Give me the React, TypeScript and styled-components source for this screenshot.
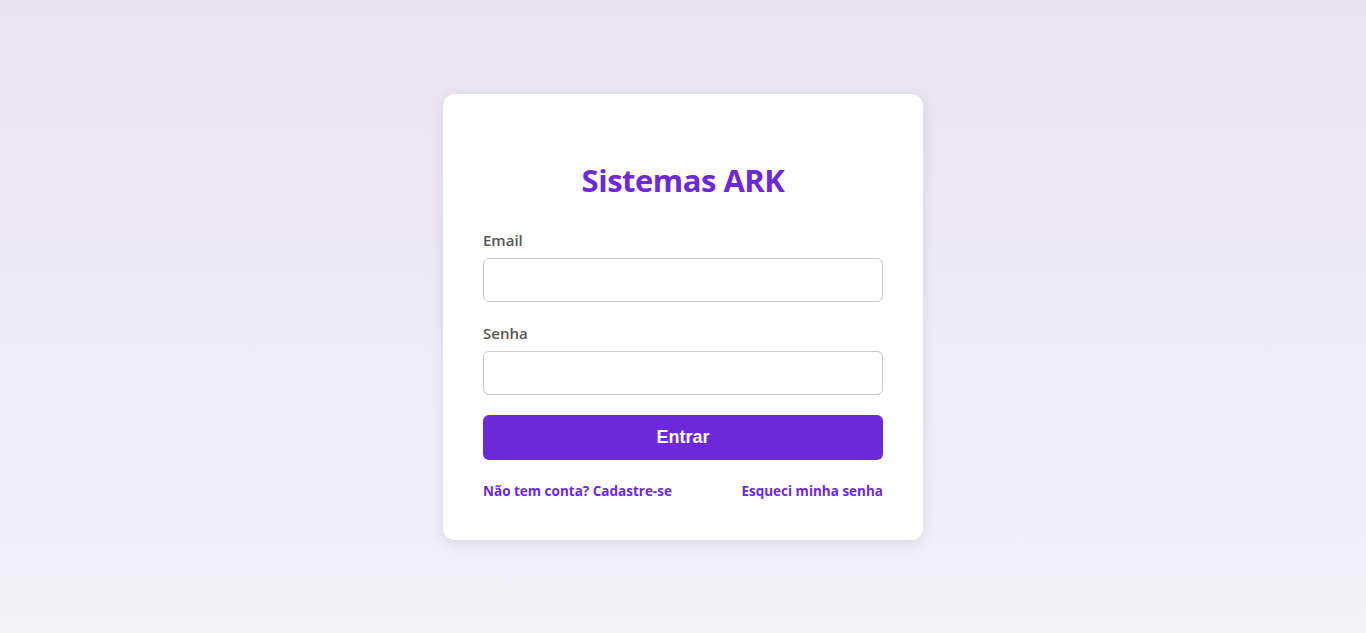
import styled, { createGlobalStyle } from 'styled-components'

const GlobalStyle = createGlobalStyle`
  html, body {
    margin: 0;
    padding: 0;
  }

  body {
    font-family: 'Open Sans', 'Noto Sans', sans-serif;
  }

  * {
    box-sizing: border-box;
  }
`

const Page = styled.div`
  height: 633px;
  display: flex;
  justify-content: center;
  align-items: flex-start;
  padding-top: 94px;
  background: linear-gradient(180deg, #e8e4f0 0%, #f3f2f7 100%);
`

const Card = styled.div`
  width: 480px;
  padding: 66px 40px 40px;
  background-color: #fff;
  border-radius: 12px;
  box-shadow: 0 4px 14px rgba(40, 30, 70, 0.12);
`

const Title = styled.h1`
  margin: 0 0 30px;
  font-size: 31px;
  line-height: 40px;
  font-weight: 700;
  text-align: center;
  color: #6d28d9;
  letter-spacing: -0.5px;
`

const Field = styled.div<{ $gap: number }>`
  display: flex;
  flex-direction: column;
  gap: 8px;
  margin-bottom: ${({ $gap }) => $gap}px;
`

const Label = styled.label`
  font-size: 15px;
  line-height: 20px;
  font-weight: 600;
  color: #555;
`

const Input = styled.input`
  width: 100%;
  height: 44px;
  padding: 0 12px;
  border: 1px solid #c9c9c9;
  border-radius: 6px;
  font-size: 15px;
  outline: none;
`

const Button = styled.button`
  width: 100%;
  height: 45px;
  border: none;
  border-radius: 6px;
  background-color: #6d28d9;
  color: #fff;
  font-family: 'Liberation Sans', Arial, sans-serif;
  font-size: 18px;
  font-weight: 700;
  cursor: pointer;
`

const Links = styled.div`
  display: flex;
  justify-content: space-between;
  margin-top: 22px;
`

const Link = styled.a`
  font-size: 13.5px;
  line-height: 18px;
  font-weight: 700;
  color: #6d28d9;
  text-decoration: none;
`

export default function App() {
  return (
    <>
      <GlobalStyle />
      <Page>
        <Card>
          <Title>Sistemas ARK</Title>
          <Field $gap={21}>
            <Label>Email</Label>
            <Input type="email" />
          </Field>
          <Field $gap={20}>
            <Label>Senha</Label>
            <Input type="password" />
          </Field>
          <Button>Entrar</Button>
          <Links>
            <Link href="#">Não tem conta? Cadastre-se</Link>
            <Link href="#">Esqueci minha senha</Link>
          </Links>
        </Card>
      </Page>
    </>
  )
}
